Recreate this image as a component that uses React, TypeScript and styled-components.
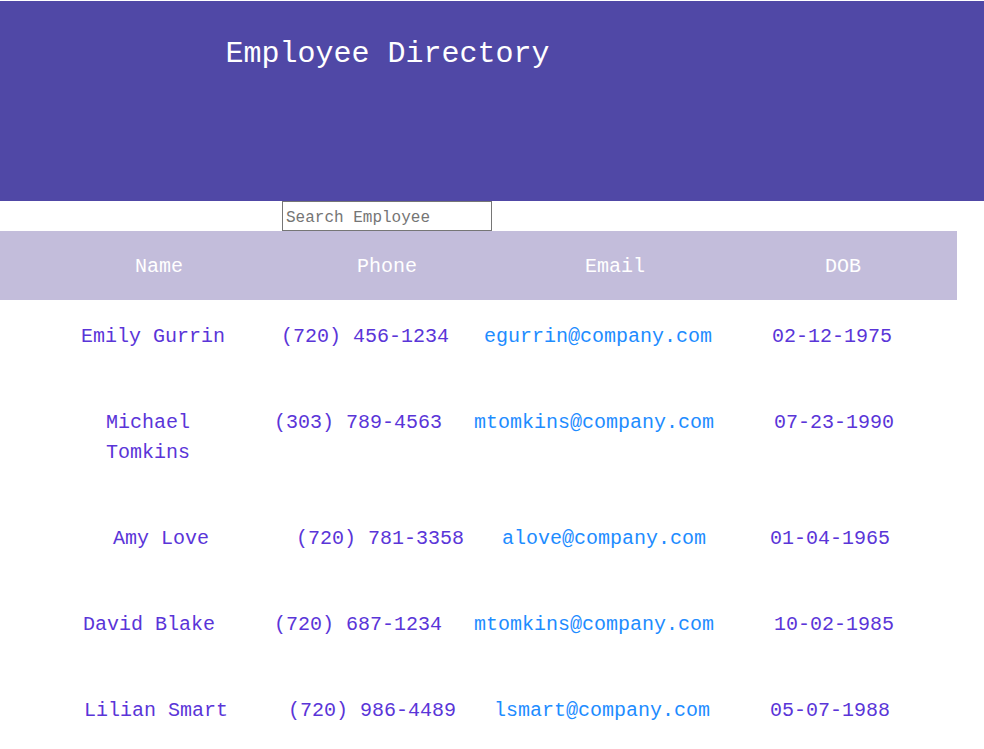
import React from "react";
import styled, { createGlobalStyle } from "styled-components";

const GlobalStyle = createGlobalStyle`
  html, body {
    margin: 0;
    padding: 0;
    background: #ffffff;
  }
  body {
    padding-top: 1px;
    font-family: "Liberation Mono", "Courier New", monospace;
  }
`;

const Header = styled.header`
  background: #5048a6;
  height: 200px;
  box-sizing: border-box;
  padding-top: 36px;
`;

const Title = styled.h1`
  margin: 0;
  width: 775px;
  text-align: center;
  font-family: "Liberation Mono", "Courier New", monospace;
  font-weight: normal;
  font-size: 30px;
  line-height: 34px;
  color: #ffffff;
`;

const SearchBar = styled.div`
  width: 774px;
  display: flex;
  justify-content: center;
`;

const SearchInput = styled.input`
  width: 210px;
  height: 30px;
  box-sizing: border-box;
  margin: 0;
  padding: 3px 3px 0;
  border: 1px solid #767676;
  border-radius: 0;
  font-family: "Liberation Mono", "Courier New", monospace;
  font-size: 16px;
  color: #333;
  outline: none;
  &::placeholder {
    color: #757575;
  }
`;

const Table = styled.div`
  width: 957px;
`;

const HeadRow = styled.div`
  display: grid;
  grid-template-columns: repeat(4, 228px);
  align-items: center;
  height: 69px;
  box-sizing: border-box;
  padding: 2px 0 0 45px;
  background: #c3bddb;
`;

const HeadCell = styled.div`
  text-align: center;
  color: #ffffff;
  font-size: 20px;
  line-height: 30px;
`;

const Row = styled.div<{ $at: number[] }>`
  display: grid;
  grid-template-columns: ${(p) =>
    `${p.$at[1] - p.$at[0]}px ${p.$at[2] - p.$at[1]}px ${p.$at[3] - p.$at[2]}px auto`};
  align-items: start;
  box-sizing: border-box;
  padding: 22px 0 34px ${(p) => p.$at[0]}px;
  font-size: 20px;
  line-height: 30px;
`;

const Cell = styled.div<{ $link?: boolean }>`
  color: ${(p) => (p.$link ? "#1e8cff" : "#5a35d8")};
  white-space: ${(p) => (p.$link ? "nowrap" : "normal")};
`;

type Employee = {
  name: string;
  phone: string;
  email: string;
  dob: string;
  at: number[];
};

const employees: Employee[] = [
  { name: "Emily Gurrin", phone: "(720) 456-1234", email: "egurrin@company.com", dob: "02-12-1975", at: [81, 281, 484, 772] },
  { name: "Michael Tomkins", phone: "(303) 789-4563", email: "mtomkins@company.com", dob: "07-23-1990", at: [106, 274, 474, 774] },
  { name: "Amy Love", phone: "(720) 781-3358", email: "alove@company.com", dob: "01-04-1965", at: [113, 296, 502, 770] },
  { name: "David Blake", phone: "(720) 687-1234", email: "mtomkins@company.com", dob: "10-02-1985", at: [83, 274, 474, 774] },
  { name: "Lilian Smart", phone: "(720) 986-4489", email: "lsmart@company.com", dob: "05-07-1988", at: [84, 288, 494, 770] },
];

export default function App() {
  return (
    <>
      <GlobalStyle />
      <Header>
        <Title>Employee Directory</Title>
      </Header>
      <SearchBar>
        <SearchInput type="text" placeholder="Search Employee" />
      </SearchBar>
      <Table>
        <HeadRow>
          <HeadCell>Name</HeadCell>
          <HeadCell>Phone</HeadCell>
          <HeadCell>Email</HeadCell>
          <HeadCell>DOB</HeadCell>
        </HeadRow>
        {employees.map((e) => (
          <Row key={e.name} $at={e.at}>
            <Cell>{e.name}</Cell>
            <Cell>{e.phone}</Cell>
            <Cell $link>{e.email}</Cell>
            <Cell>{e.dob}</Cell>
          </Row>
        ))}
      </Table>
    </>
  );
}
